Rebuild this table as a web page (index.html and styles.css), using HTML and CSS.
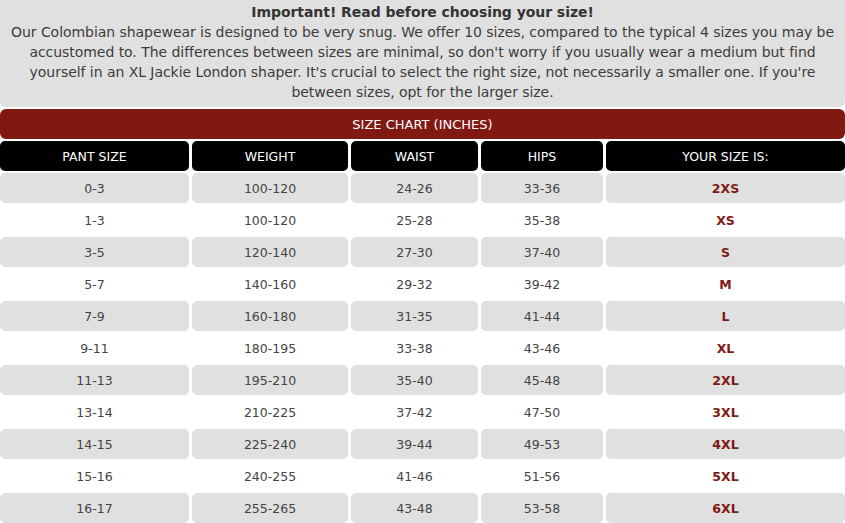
FILE: index.html
```html
<!DOCTYPE html>
<html>
<head>
<meta charset="utf-8">
<link rel="stylesheet" href="styles.css">
</head>
<body>
<div class="page">
  <div class="notice">
    <p class="notice-title">Important! Read before choosing your size!</p>
    <p class="notice-text">Our Colombian shapewear is designed to be very snug. We offer 10 sizes, compared to the typical 4 sizes you may be accustomed to. The differences between sizes are minimal, so don't worry if you usually wear a medium but find yourself in an XL Jackie London shaper. It's crucial to select the right size, not necessarily a smaller one. If you're between sizes, opt for the larger size.</p>
  </div>
  <div class="chart-title">SIZE CHART (INCHES)</div>
  <div class="grid">
    <div class="cell head">PANT SIZE</div><div class="cell head">WEIGHT</div><div class="cell head">WAIST</div><div class="cell head">HIPS</div><div class="cell head">YOUR SIZE IS:</div>

    <div class="cell alt">0-3</div><div class="cell alt">100-120</div><div class="cell alt">24-26</div><div class="cell alt">33-36</div><div class="cell alt size">2XS</div>
    <div class="cell">1-3</div><div class="cell">100-120</div><div class="cell">25-28</div><div class="cell">35-38</div><div class="cell size">XS</div>
    <div class="cell alt">3-5</div><div class="cell alt">120-140</div><div class="cell alt">27-30</div><div class="cell alt">37-40</div><div class="cell alt size">S</div>
    <div class="cell">5-7</div><div class="cell">140-160</div><div class="cell">29-32</div><div class="cell">39-42</div><div class="cell size">M</div>
    <div class="cell alt">7-9</div><div class="cell alt">160-180</div><div class="cell alt">31-35</div><div class="cell alt">41-44</div><div class="cell alt size">L</div>
    <div class="cell">9-11</div><div class="cell">180-195</div><div class="cell">33-38</div><div class="cell">43-46</div><div class="cell size">XL</div>
    <div class="cell alt">11-13</div><div class="cell alt">195-210</div><div class="cell alt">35-40</div><div class="cell alt">45-48</div><div class="cell alt size">2XL</div>
    <div class="cell">13-14</div><div class="cell">210-225</div><div class="cell">37-42</div><div class="cell">47-50</div><div class="cell size">3XL</div>
    <div class="cell alt">14-15</div><div class="cell alt">225-240</div><div class="cell alt">39-44</div><div class="cell alt">49-53</div><div class="cell alt size">4XL</div>
    <div class="cell">15-16</div><div class="cell">240-255</div><div class="cell">41-46</div><div class="cell">51-56</div><div class="cell size">5XL</div>
    <div class="cell alt">16-17</div><div class="cell alt">255-265</div><div class="cell alt">43-48</div><div class="cell alt">53-58</div><div class="cell alt size">6XL</div>
  </div>
</div>
</body>
</html>
```

FILE: styles.css
```css
html, body {
  margin: 0;
  padding: 0;
  background: #ffffff;
}

body {
  font-family: "DejaVu Sans", "Liberation Sans", sans-serif;
  color: #3c3c3c;
}

.page {
  width: 845px;
  display: flex;
  flex-direction: column;
  gap: 2px;
}

.notice {
  background: #e0e0e0;
  border-radius: 0 0 6px 6px;
  padding: 2px 8px 5px;
  text-align: center;
  font-size: 14px;
  letter-spacing: -0.05px;
  line-height: 20px;
}

.notice p {
  margin: 0;
}

.notice-title {
  font-weight: bold;
  color: #333333;
}

.chart-title {
  background: #811913;
  color: #ffffff;
  border-radius: 6px;
  height: 30px;
  display: flex;
  align-items: center;
  justify-content: center;
  font-size: 13px;
}

.grid {
  display: grid;
  grid-template-columns: 189px 156px 127px 122px 239px;
  grid-auto-rows: 30px;
  column-gap: 3px;
  row-gap: 2px;
}

.cell {
  display: flex;
  align-items: center;
  justify-content: center;
  border-radius: 5px;
  font-size: 12.5px;
  color: #444444;
}

.cell.head {
  background: #000000;
  color: #ffffff;
}

.cell.alt {
  background: #e0e0e0;
}

.cell.size {
  color: #7f1914;
  font-weight: bold;
}
```
